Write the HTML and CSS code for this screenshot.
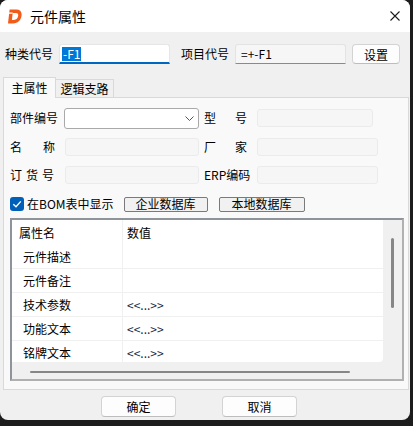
FILE: index.html
```html
<!DOCTYPE html>
<html lang="zh">
<head>
<meta charset="utf-8">
<title>元件属性</title>
<link rel="stylesheet" href="styles.css">
</head>
<body>
<div class="window">
  <div class="titlebar">
    <svg class="logo" viewBox="0 0 14 15" aria-hidden="true">
      <path fill="#f25c19" fill-rule="evenodd" d="M1.6 0.6 H8.3 C12.3 0.6 14.2 3.2 13.5 7 C12.8 11.2 9.7 14.4 5.2 14.4 H0 Z M4.7 4.1 H7.9 C9.8 4.1 10.5 5.3 10.1 7.3 C9.6 9.6 8.1 10.9 6 10.9 H3.9 Z"/>
      <path d="M0.4 4.1 H4.7" stroke="#ffffff" stroke-width="1.1"/>
    </svg>
    <span class="title">元件属性</span>
    <svg class="close" viewBox="0 0 10 10" aria-hidden="true">
      <path d="M0.5 0.5 L9.5 9.5 M9.5 0.5 L0.5 9.5" stroke="#1a1a1a" stroke-width="1.1" fill="none"/>
    </svg>
  </div>

  <div class="toprow">
    <span class="lbl">种类代号</span>
    <div class="field focus"><span class="sel">-F1</span></div>
    <span class="lbl lbl-mid">项目代号</span>
    <div class="field ro">=+-F1</div>
    <button class="btn btn-set">设置</button>
  </div>

  <div class="tabs">
    <div class="tab active">主属性</div>
    <div class="tab">逻辑支路</div>
  </div>

  <div class="panel">
    <div class="frow r1">
      <span class="flbl">部件编号</span>
      <div class="combo">
        <svg class="chev" viewBox="0 0 9 5" aria-hidden="true"><path d="M0.5 0.5 L4.5 4.5 L8.5 0.5" stroke="#555" stroke-width="1" fill="none"/></svg>
      </div>
      <span class="rlbl sp19">型号</span>
      <div class="dis short"></div>
    </div>
    <div class="frow r2">
      <span class="flbl sp21">名称</span>
      <div class="dis left"></div>
      <span class="rlbl sp19">厂家</span>
      <div class="dis long"></div>
    </div>
    <div class="frow r3">
      <span class="flbl sp4">订货号</span>
      <div class="dis left"></div>
      <span class="rlbl">ERP编码</span>
      <div class="dis long"></div>
    </div>
    <div class="chkrow">
      <span class="chk"><svg viewBox="0 0 14 14" aria-hidden="true"><path d="M3.3 7.2 L6 9.8 L10.8 4.4" stroke="#fff" stroke-width="1.4" fill="none"/></svg></span>
      <span class="chktext">在BOM表中显示</span>
      <button class="btn2 b1">企业数据库</button>
      <button class="btn2 b2">本地数据库</button>
    </div>

    <div class="grid">
      <div class="list">
        <div class="row head"><div class="c1">属性名</div><div class="c2">数值</div></div>
        <div class="row"><div class="c1">元件描述</div><div class="c2"></div></div>
        <div class="row"><div class="c1">元件备注</div><div class="c2"></div></div>
        <div class="row"><div class="c1">技术参数</div><div class="c2">&lt;&lt;...&gt;&gt;</div></div>
        <div class="row"><div class="c1">功能文本</div><div class="c2">&lt;&lt;...&gt;&gt;</div></div>
        <div class="row"><div class="c1">铭牌文本</div><div class="c2">&lt;&lt;...&gt;&gt;</div></div>
      </div>
      <div class="vscroll"><div class="thumb"></div></div>
      <div class="hscroll"><div class="hbar"></div></div>
    </div>
  </div>

  <div class="footer">
    <button class="btn btn-foot">确定</button>
    <button class="btn btn-foot">取消</button>
  </div>
</div>
</body>
</html>
```

FILE: styles.css
```css
html, body {
  margin: 0;
  padding: 0;
}
body {
  background: #1c1c1c;
  font-family: "Noto Sans CJK SC", "Noto Sans", sans-serif;
  font-size: 12px;
  color: #000;
  width: 413px;
  height: 426px;
  overflow: hidden;
}
button {
  font-family: inherit;
  font-size: 12px;
  color: #000;
  padding: 0;
  margin: 0;
}

.window {
  width: 410px;
  height: 420px;
  background: #f0f0f0;
  border-radius: 8px;
  overflow: hidden;
  display: flex;
  flex-direction: column;
}

/* title bar */
.titlebar {
  height: 32px;
  flex-shrink: 0;
  background: #fff;
  display: flex;
  align-items: center;
}
.logo {
  width: 14px;
  height: 15px;
  margin-left: 8px;
}
.title {
  margin-left: 8px;
  font-size: 14px;
  line-height: 20px;
}
.close {
  width: 10px;
  height: 10px;
  margin-left: auto;
  margin-right: 10px;
}

/* first row */
.toprow {
  display: flex;
  align-items: center;
  height: 20px;
  margin-top: 12px;
  padding-left: 5px;
}
.lbl {
  line-height: 20px;
  white-space: nowrap;
}
.lbl-mid {
  margin-left: 11px;
}
.field {
  box-sizing: border-box;
  width: 111px;
  height: 20px;
  margin-left: 6px;
  display: flex;
  align-items: center;
  white-space: nowrap;
}
.field.focus {
  background: #fff;
  border: 1px solid #e6e6e6;
  border-bottom: 2px solid #0067c0;
  border-radius: 3px 3px 0 0;
  padding-left: 2px;
}
.sel {
  background: #0078d7;
  color: #fff;
  line-height: 14px;
  padding: 0 1px;
}
.field.ro {
  background: #f6f6f6;
  border: 1px solid #e3e3e3;
  border-bottom-color: #8a8a8a;
  border-radius: 3px 3px 0 0;
  padding-left: 5px;
  line-height: 18px;
}
.btn {
  box-sizing: border-box;
  background: #fdfdfd;
  border: 1px solid #d3d3d3;
  border-bottom-color: #bdbdbd;
  border-radius: 4px;
  line-height: 17px;
}
.btn-set {
  width: 48px;
  height: 20px;
  margin-left: 6px;
}

/* tabs */
.tabs {
  display: flex;
  align-items: flex-end;
  height: 20px;
  margin-top: 13px;
  padding-left: 3px;
  position: relative;
  z-index: 1;
}
.tab {
  box-sizing: border-box;
  text-align: center;
  border: 1px solid #d9d9d9;
  border-bottom: none;
  white-space: nowrap;
}
.tab.active {
  width: 53px;
  height: 21px;
  margin-bottom: -1px;
  background: #f9f9f9;
  line-height: 20px;
}
.tab:not(.active) {
  width: 58px;
  height: 18px;
  border-left: none;
  line-height: 18px;
  background: #f0f0f0;
}

/* panel */
.panel {
  box-sizing: border-box;
  width: 406px;
  height: 293px;
  margin-left: 3px;
  background: #f9f9f9;
  border: 1px solid #d9d9d9;
  padding: 9px 0 0 6px;
}
.frow {
  display: flex;
  align-items: center;
  height: 22px;
}
.r2 { margin-top: 7px; }
.r3 { margin-top: 6px; }
.flbl {
  width: 54px;
  flex-shrink: 0;
  white-space: nowrap;
  line-height: 16px;
}
.rlbl {
  width: 53px;
  margin-left: 5px;
  flex-shrink: 0;
  white-space: nowrap;
  line-height: 16px;
}
.sp21 { letter-spacing: 21px; }
.sp19 { letter-spacing: 19px; }
.sp4 { letter-spacing: 4px; }

.combo {
  box-sizing: border-box;
  width: 135px;
  height: 21px;
  background: #fff;
  border: 1px solid #a9a9a9;
  border-radius: 3px;
  display: flex;
  align-items: center;
  justify-content: flex-end;
  padding-right: 4px;
}
.chev {
  width: 9px;
  height: 5px;
}
.dis {
  box-sizing: border-box;
  height: 18px;
  background: #f6f6f6;
  border: 1px solid #ebebeb;
  border-radius: 3px;
}
.dis.left {
  width: 134px;
  margin-left: 1px;
}
.dis.short { width: 116px; }
.dis.long { width: 121px; }

.chkrow {
  display: flex;
  align-items: center;
  height: 16px;
  margin-top: 10px;
}
.chk {
  width: 14px;
  height: 14px;
  background: #005fb8;
  border-radius: 3px;
  display: flex;
}
.chk svg {
  width: 14px;
  height: 14px;
}
.chktext {
  margin-left: 3px;
  line-height: 16px;
  white-space: nowrap;
}
.btn2 {
  box-sizing: border-box;
  height: 15px;
  background: #f1f1f1;
  border: 1px solid #7a7a7a;
  border-radius: 2px;
  line-height: 12px;
  white-space: nowrap;
}
.b1 {
  width: 84px;
  margin-left: 10px;
}
.b2 {
  width: 86px;
  margin-left: 11px;
}

/* property grid */
.grid {
  box-sizing: border-box;
  width: 394px;
  height: 163px;
  margin-top: 6px;
  border: 2px solid;
  border-color: #8f949a #b0b0b0 #b0b0b0 #8f949a;
  display: grid;
  grid-template-columns: 1fr 19px;
  grid-template-rows: 1fr 17px;
  background: #f0f0f0;
}
.list {
  background: #fff;
  overflow: hidden;
  border-radius: 0 0 4px 0;
}
.row {
  display: flex;
  height: 24px;
  box-sizing: border-box;
  border-bottom: 1px solid #f0f0f0;
  line-height: 23px;
}
.row.head {
  height: 25px;
  border-bottom: none;
  line-height: 25px;
}
.c1 {
  width: 111px;
  flex-shrink: 0;
  box-sizing: border-box;
  padding-left: 11px;
  border-right: 1px solid #f0f0f0;
  white-space: nowrap;
}
.head .c1 {
  padding-left: 7px;
}
.c2 {
  padding-left: 4px;
  color: #1b2a44;
  white-space: nowrap;
}
.head .c2 {
  color: #000;
}
.vscroll {
  background: #f0f0f0;
  padding: 18px 0 0 8px;
}
.thumb {
  width: 3px;
  height: 70px;
  background: #868686;
  border-radius: 2px;
}
.hscroll {
  grid-column: 1 / 3;
  padding: 9px 0 0 18px;
}
.hbar {
  width: 320px;
  height: 2px;
  background: #868686;
  border-radius: 1px;
}

/* footer */
.footer {
  display: flex;
  gap: 46px;
  margin-top: 6px;
  padding-left: 101px;
}
.btn-foot {
  width: 75px;
  height: 21px;
}
```
